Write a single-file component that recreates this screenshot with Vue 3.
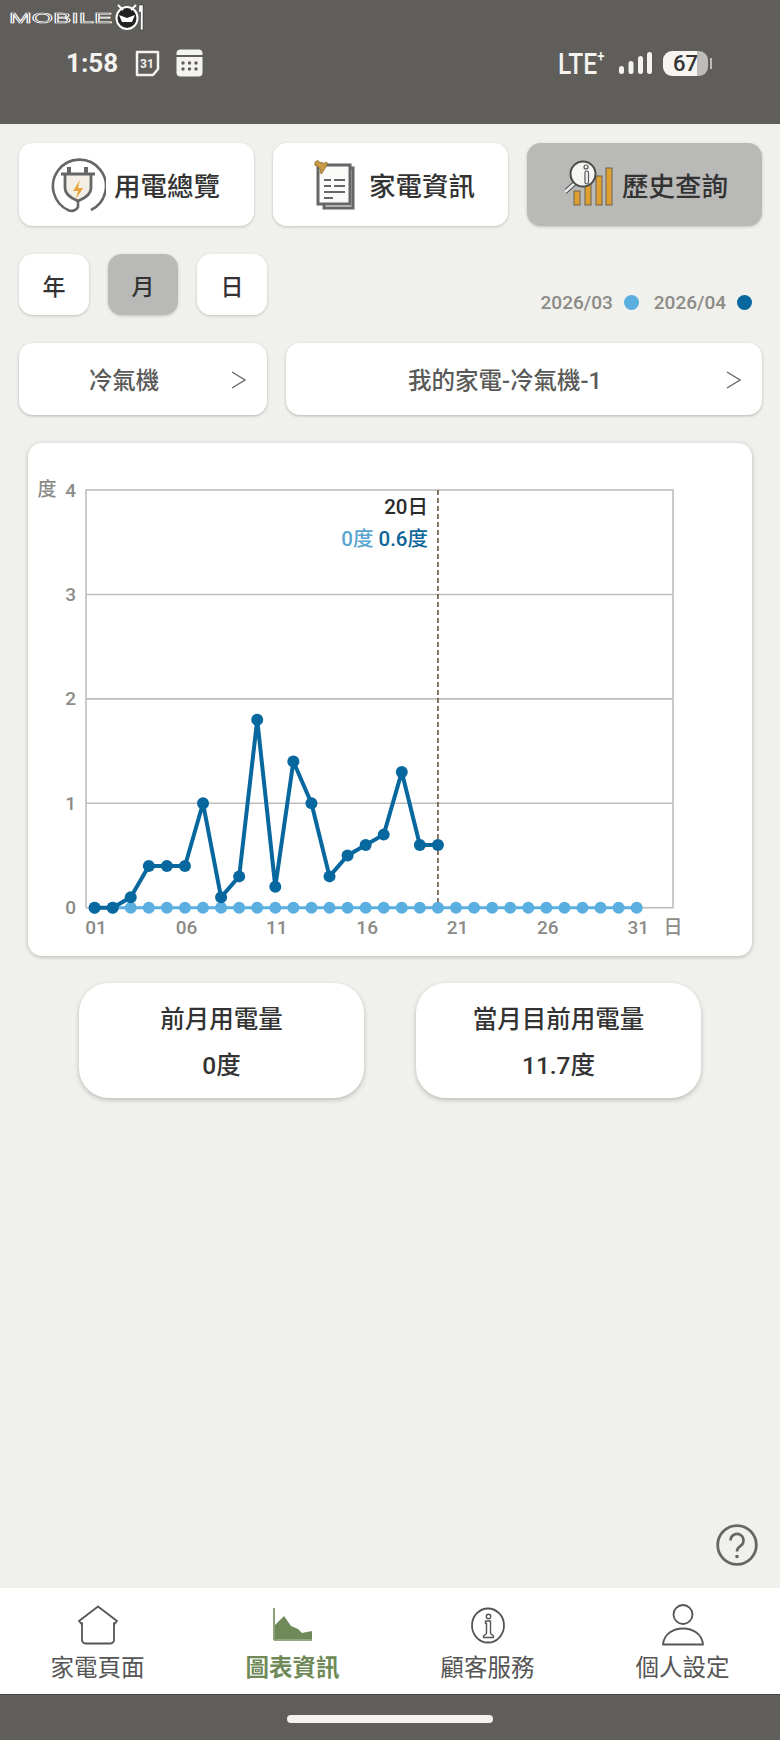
<script setup>
import { computed } from 'vue';

const chart = { left: 86, right: 673, top: 490, zero: 907.7, unit: 104.4, x1: 94.6, step: 18.07 };

const current = [0, 0, 0.1, 0.4, 0.4, 0.4, 1, 0.1, 0.3, 1.8, 0.2, 1.4, 1, 0.3, 0.5, 0.6, 0.7, 1.3, 0.6, 0.6];
const previous = Array(31).fill(0);

const toPoints = (list) => list.map((v, i) => ({
    x: chart.x1 + i * chart.step,
    y: chart.zero - v * chart.unit,
}));

const currentPts = computed(() => toPoints(current));
const previousPts = computed(() => toPoints(previous));
const line = (pts) => pts.map((p) => `${p.x},${p.y}`).join(' ');

const yTicks = [4, 3, 2, 1, 0];
const xTicks = ['01', '06', '11', '16', '21', '26', '31'];
const tickY = (v) => chart.zero - v * chart.unit;
const tickX = (i) => chart.x1 + i * 5 * chart.step + 1.5;
const cursorX = chart.x1 + 19 * chart.step;

const periods = [
    { label: '年', active: false },
    { label: '月', active: true },
    { label: '日', active: false },
];
</script>

<template>
    <div class="page">
        <div class="watermark">
            <span class="wm-text">MOBILE</span>
            <svg class="wm-face" width="30" height="28" viewBox="0 0 30 28">
                <ellipse cx="12" cy="15" rx="10.5" ry="11" fill="#222" stroke="#fff" stroke-width="2" />
                <path d="M3 2l5 5M21 2l-5 5" stroke="#fff" stroke-width="2" />
                <path d="M4 12l8 3 8-3-3 7h-10z" fill="#fff" />
                <path d="M24 2h4v25h-2.500V9l-2 .5z" fill="#fff" stroke="#222" stroke-width=".5" />
            </svg>
        </div>

        <header class="status">
            <div class="status-left">
                <span class="time">1:58</span>
                <svg class="cal-a" width="27" height="28" viewBox="0 0 27 28">
                    <path d="M3 3h21v17l-5 6H3z" fill="none" stroke="#f4f3ef" stroke-width="2.5" stroke-linejoin="round" />
                    <text x="13" y="19" text-anchor="middle" class="cal-num">31</text>
                </svg>
                <svg width="27" height="28" viewBox="0 0 27 28">
                    <rect x="0.5" y="0.5" width="26" height="27" rx="4" fill="#f4f3ef" />
                    <rect x="0" y="6" width="27" height="2" fill="#5f5e5a" />
                    <g fill="#5f5e5a">
                        <circle cx="7" cy="14" r="1.7" /><circle cx="13.500" cy="14" r="1.7" /><circle cx="20" cy="14" r="1.7" />
                        <circle cx="7" cy="20" r="1.7" /><circle cx="13.500" cy="20" r="1.7" /><circle cx="20" cy="20" r="1.7" />
                    </g>
                </svg>
            </div>
            <div class="status-right">
                <span class="lte">LTE<sup>+</sup></span>
                <svg width="34" height="23" viewBox="0 0 34 23">
                    <rect x="0" y="14" width="5" height="8" rx="2.5" fill="#f4f3ef" />
                    <rect x="9.500" y="9" width="5" height="13" rx="2.5" fill="#f4f3ef" />
                    <rect x="19" y="4" width="5" height="18" rx="2.5" fill="#f4f3ef" />
                    <rect x="28" y="0" width="5" height="22" rx="2.5" fill="#f4f3ef" />
                </svg>
                <div class="battery"><span>67</span></div>
                <i class="nub"></i>
            </div>
        </header>

        <main class="main">
            <div class="tabs">
                <button class="tab tab-plug">
                    <svg width="56" height="56" viewBox="0 0 56 56">
                        <path d="M41 53A26.500 26.500 0 1 0 19 53.500Q25 55 28 50V44" fill="none" stroke="#666" stroke-width="2.6" />
                        <path d="M19 10v6M36 10v6" stroke="#666" stroke-width="4" />
                        <path d="M11 17h34M15 17v14q0 8 13 13q13-5 13-13V17" fill="#f3efe6" stroke="#666" stroke-width="2.8" />
                        <path d="M30 23l-7 11h5l-2 8 7-11h-5z" fill="#e5a33a" />
                    </svg>
                    <span>用電總覽</span>
                </button>
                <button class="tab tab-doc">
                    <svg width="42" height="50" viewBox="0 0 42 50">
                        <path d="M37 8h3v40H11v-3" fill="none" stroke="#666" stroke-width="3" />
                        <rect x="5" y="5" width="32" height="39" fill="#fafaf8" stroke="#666" stroke-width="3" />
                        <path d="M11 20h7M21 20h11M11 26h7M21 26h11M11 32h21M11 38h9" stroke="#666" stroke-width="2" />
                        <path d="M3 1l3-1 1 2 5 2 2-1 1 2-8 9-1-2 1-2-3-5-2-1z" fill="#c99a45" stroke="#8a6a34" stroke-width=".8" transform="rotate(-10 8 6)" />
                    </svg>
                    <span>家電資訊</span>
                </button>
                <button class="tab tab-hist active">
                    <svg width="50" height="50" viewBox="2 0 50 50">
                        <g fill="#e0a030" stroke="#6b6353" stroke-width="1">
                            <rect x="11" y="31" width="6" height="14" />
                            <rect x="22" y="24" width="6" height="21" />
                            <rect x="33" y="16" width="6" height="29" />
                            <rect x="43" y="8" width="6" height="37" />
                        </g>
                        <path d="M2 32l10-9" stroke="#555" stroke-width="5" />
                        <path d="M2 32l10-9" stroke="#eee" stroke-width="2.5" />
                        <circle cx="20" cy="14" r="12.500" fill="#f5f5f3" stroke="#4a4a48" stroke-width="2" />
                        <circle cx="23" cy="7" r="2" fill="none" stroke="#555" stroke-width="1.2" />
                        <rect x="22" y="11" width="3.5" height="13" rx="1.7" fill="none" stroke="#555" stroke-width="1.2" />
                    </svg>
                    <span>歷史查詢</span>
                </button>
            </div>

            <div class="period-row">
                <div class="periods">
                    <button v-for="p in periods" :key="p.label" class="period" :class="{ active: p.active }">{{ p.label }}</button>
                </div>
                <div class="legend">
                    <span>2026/03</span><i class="dot dot-light"></i>
                    <span class="legend-second">2026/04</span><i class="dot dot-dark"></i>
                </div>
            </div>

            <div class="selects">
                <button class="select select-a">
                    <span>冷氣機</span>
                    <svg class="chevron" width="16" height="18" viewBox="0 0 16 18"><path d="M1 1l13 8-13 8" fill="none" stroke="#666" stroke-width="1.4" /></svg>
                </button>
                <button class="select select-b">
                    <span>我的家電-冷氣機-1</span>
                    <svg class="chevron" width="16" height="18" viewBox="0 0 16 18"><path d="M1 1l13 8-13 8" fill="none" stroke="#666" stroke-width="1.4" /></svg>
                </button>
            </div>

            <section class="chart-card">
                <svg width="724" height="513" viewBox="28 443 724 513">
                    <rect :x="chart.left" :y="chart.top" :width="chart.right - chart.left" :height="chart.zero - chart.top" fill="none" stroke="#bdbdb9" stroke-width="1.6" />
                    <line v-for="v in [3, 2, 1]" :key="v" :x1="chart.left" :x2="chart.right" :y1="tickY(v)" :y2="tickY(v)" stroke="#bdbdb9" stroke-width="1.6" />

                    <text x="47" y="496" class="axis" text-anchor="middle">度</text>
                    <text v-for="v in yTicks" :key="'y' + v" x="76" :y="tickY(v) + 6.500" class="axis" text-anchor="end">{{ v }}</text>
                    <text v-for="(t, i) in xTicks" :key="t" :x="tickX(i)" y="933.500" class="axis" text-anchor="middle">{{ t }}</text>
                    <text x="673" y="934" class="axis" text-anchor="middle">日</text>

                    <line :x1="cursorX" :x2="cursorX" :y1="chart.top" :y2="chart.zero" stroke="#6d5138" stroke-width="1.6" stroke-dasharray="5 3" />

                    <polyline :points="line(previousPts)" fill="none" stroke="#5aaee0" stroke-width="3" />
                    <circle v-for="(p, i) in previousPts" :key="'p' + i" :cx="p.x" :cy="p.y" r="6" fill="#5aaee0" />

                    <polyline :points="line(currentPts)" fill="none" stroke="#07679f" stroke-width="4" stroke-linejoin="round" />
                    <circle v-for="(p, i) in currentPts" :key="'c' + i" :cx="p.x" :cy="p.y" r="6" fill="#07679f" />

                    <text x="428" y="514" class="tip tip-day" text-anchor="end">20日</text>
                    <text x="428" y="546" class="tip" text-anchor="end"><tspan fill="#57a5d0">0度</tspan><tspan fill="#0d6597" dx="5">0.6度</tspan></text>
                </svg>
            </section>

            <div class="stats">
                <div class="stat">
                    <div>前月用電量</div>
                    <div>0度</div>
                </div>
                <div class="stat">
                    <div>當月目前用電量</div>
                    <div>11.7度</div>
                </div>
            </div>

            <div class="help-row">
                <svg width="42" height="42" viewBox="0 0 42 42">
                    <circle cx="21" cy="21" r="19.300" fill="none" stroke="#666" stroke-width="2.8" />
                    <path d="M14.500 16.500a6.500 6.500 0 1 1 10 5.400c-2.200 1.500-3.500 2.600-3.500 5.600" fill="none" stroke="#666" stroke-width="2.6" />
                    <circle cx="21" cy="32.500" r="1.8" fill="#666" />
                </svg>
            </div>
        </main>

        <nav class="nav">
            <div class="nav-item">
                <div class="nav-icon">
                    <svg width="42" height="40" viewBox="0 0 42 40">
                        <path d="M21 1.500L40 16l-2.500 3-.5-1v17a3.500 3.500 0 0 1-3.500 3.500h-25A3.500 3.500 0 0 1 5 35V18l-.5 1L2 16z" fill="none" stroke="#555" stroke-width="1.8" stroke-linejoin="round" />
                    </svg>
                </div>
                <span>家電頁面</span>
            </div>
            <div class="nav-item nav-active">
                <div class="nav-icon">
                    <svg width="40" height="34" viewBox="0 0 40 34">
                        <path d="M1 0v32" stroke="#6f8a58" stroke-width="1.6" />
                        <path d="M2 31V17L11 8l7 10 7 3 4 4 10-2v8z" fill="#6f8a58" />
                        <path d="M1 32h38" stroke="#6f8a58" stroke-width="1.6" />
                    </svg>
                </div>
                <span>圖表資訊</span>
            </div>
            <div class="nav-item">
                <div class="nav-icon">
                    <svg width="34" height="37" viewBox="0 0 34 37">
                        <ellipse cx="17" cy="18.500" rx="16" ry="17" fill="none" stroke="#555" stroke-width="1.8" />
                        <circle cx="17.500" cy="9.500" r="2.200" fill="none" stroke="#555" stroke-width="1.4" />
                        <path d="M14.500 14h5v12.500l3 2.500v1.500h-10V29l3-2.500V16.500h-1z" fill="none" stroke="#555" stroke-width="1.4" stroke-linejoin="round" />
                    </svg>
                </div>
                <span>顧客服務</span>
            </div>
            <div class="nav-item">
                <div class="nav-icon">
                    <svg width="42" height="42" viewBox="0 0 42 42">
                        <ellipse cx="21" cy="10.500" rx="9.500" ry="9.500" fill="none" stroke="#555" stroke-width="1.8" />
                        <path d="M1 40.500C2 30 11 24.500 21 24.500s19 5.500 20 16z" fill="none" stroke="#555" stroke-width="1.8" stroke-linejoin="round" />
                    </svg>
                </div>
                <span>個人設定</span>
            </div>
        </nav>

        <div class="home-bar"><i></i></div>
    </div>
</template>

<style>
html, body {
    margin: 0;
    background: #f0f0ec;
}
</style>

<style scoped>
.page {
    position: relative;
    width: 780px;
    height: 1740px;
    display: flex;
    flex-direction: column;
    background: #f0f0ec;
    font-family: Roboto, "Noto Sans CJK TC", sans-serif;
    overflow: hidden;
}

button {
    border: 0;
    padding: 0;
    font-family: inherit;
    cursor: pointer;
}

.watermark {
    position: absolute;
    left: 9px;
    top: 3px;
    width: 136px;
    height: 28px;
    display: flex;
    align-items: center;
}

.wm-text {
    display: block;
    width: 54px;
    margin-top: 2px;
    transform: scale(1.95, 1);
    transform-origin: left center;
    font: 400 14px "Liberation Sans", sans-serif;
    color: #333;
    -webkit-text-stroke: 0.7px #fff;
}

.wm-face {
    position: absolute;
    left: 106px;
    top: 0;
}

.status {
    height: 124px;
    flex: none;
    box-sizing: border-box;
    padding: 48px 68px 0 66px;
    display: flex;
    justify-content: space-between;
    align-items: flex-start;
    background: #5f5e5a;
    color: #f4f3ef;
}

.status-left,
.status-right {
    display: flex;
    align-items: center;
    height: 30px;
}

.time {
    width: 52px;
    font-size: 26px;
    font-weight: 700;
}

.cal-a {
    margin: 0 15px 0 16px;
}

.cal-num {
    font-size: 12px;
    font-weight: 700;
    fill: #f4f3ef;
}

.lte {
    display: block;
    width: 50px;
    margin-right: 11px;
    transform: scaleX(0.82);
    transform-origin: left center;
    font-size: 30px;
    font-weight: 500;
    white-space: nowrap;
}

.lte sup {
    font-size: 16px;
    line-height: 0;
    vertical-align: 12px;
}

.battery {
    width: 45px;
    height: 25px;
    margin-left: 10px;
    border-radius: 9px;
    display: flex;
    align-items: center;
    justify-content: center;
    background: linear-gradient(to right, #f6f5f1 76%, #bdbcb8 76%);
    color: #333;
    font-size: 22px;
    font-weight: 500;
}

.nub {
    width: 2px;
    height: 11px;
    margin-left: 2px;
    background: #bdbcb8;
}

.main {
    flex: 1;
    display: flex;
    flex-direction: column;
    padding: 19px 18px 0 19px;
    min-height: 0;
}

.tabs {
    display: flex;
    gap: 19px;
}

.tab {
    width: 235px;
    height: 83px;
    display: flex;
    align-items: center;
    justify-content: center;
    gap: 6px;
    border-radius: 14px;
    background: #fff;
    box-shadow: 0 1px 3px rgba(0, 0, 0, 0.2);
    color: #333;
    font-size: 26.5px;
    font-weight: 500;
}

.tab-plug {
    gap: 8px;
    padding-right: 3px;
}

.tab-doc {
    gap: 14px;
    padding-left: 7px;
}

.tab-hist {
    gap: 7px;
    padding-left: 4px;
}

.tab.active,
.period.active {
    background: #b9b9b7;
}

.period-row {
    height: 61px;
    margin-top: 28px;
    display: flex;
    justify-content: space-between;
}

.periods {
    display: flex;
    gap: 19px;
}

.period {
    width: 70px;
    height: 61px;
    border-radius: 14px;
    background: #fff;
    box-shadow: 0 1px 3px rgba(0, 0, 0, 0.2);
    color: #333;
    font-size: 23px;
    font-weight: 500;
}

.legend {
    align-self: flex-end;
    height: 26px;
    padding-right: 10px;
    display: flex;
    align-items: center;
    color: #8b8b87;
    font-size: 19px;
    font-weight: 500;
}

.legend-second {
    margin-left: 15px;
}

.dot {
    width: 15px;
    height: 15px;
    margin-left: 11px;
    border-radius: 50%;
}

.dot-light {
    background: #5aaee0;
}

.dot-dark {
    background: #07679f;
}

.selects {
    margin-top: 28px;
    display: flex;
    gap: 19px;
}

.select {
    position: relative;
    height: 72px;
    box-sizing: border-box;
    padding-right: 38px;
    border-radius: 14px;
    background: #fff;
    box-shadow: 0 1px 3px rgba(0, 0, 0, 0.25);
    color: #5a5a58;
    font-size: 23.5px;
    font-weight: 500;
}

.select-a {
    width: 248px;
}

.select-b {
    flex: 1;
}

.chevron {
    position: absolute;
    right: 20px;
    top: 28px;
}

.chart-card {
    width: 724px;
    height: 513px;
    margin: 28px 0 0 9px;
    border-radius: 14px;
    background: #fff;
    box-shadow: 0 1px 4px rgba(0, 0, 0, 0.25);
}

.chart-card svg {
    display: block;
}

.axis {
    font-size: 19px;
    font-weight: 500;
    fill: #8b8b87;
}

.tip {
    font-size: 20.5px;
    font-weight: 500;
}

.tip-day {
    fill: #2b2b2b;
}

.stats {
    margin-top: 27px;
    padding-left: 60px;
    display: flex;
    gap: 52px;
}

.stat {
    width: 285px;
    height: 115px;
    box-sizing: border-box;
    padding-top: 20px;
    display: flex;
    flex-direction: column;
    gap: 12px;
    align-items: center;
    border-radius: 30px;
    background: #fff;
    box-shadow: 0 2px 5px rgba(0, 0, 0, 0.22);
    color: #333;
    font-size: 24.5px;
    font-weight: 500;
    line-height: 34px;
}

.help-row {
    margin-top: auto;
    margin-bottom: 22px;
    padding-right: 4px;
    display: flex;
    justify-content: flex-end;
}

.help-row svg {
    display: block;
}

.nav {
    height: 106px;
    flex: none;
    display: grid;
    grid-template-columns: repeat(4, 195px);
    background: #fff;
    color: #555;
    font-size: 23.5px;
}

.nav-item {
    display: flex;
    flex-direction: column;
    align-items: center;
}

.nav-icon {
    height: 42px;
    margin-top: 16px;
    display: flex;
    align-items: center;
    justify-content: center;
}

.nav-icon svg {
    display: block;
}

.nav-item span {
    margin-top: 5px;
    line-height: 34px;
}

.nav-active {
    color: #6f8a58;
    font-weight: 700;
}

.home-bar {
    height: 46px;
    flex: none;
    box-sizing: border-box;
    padding-top: 20px;
    display: flex;
    justify-content: center;
    align-items: flex-start;
    border-top: 1px solid #444;
    background: #5f5e5a;
}

.home-bar i {
    width: 206px;
    height: 8px;
    border-radius: 4px;
    background: #f4f3ef;
}
</style>
